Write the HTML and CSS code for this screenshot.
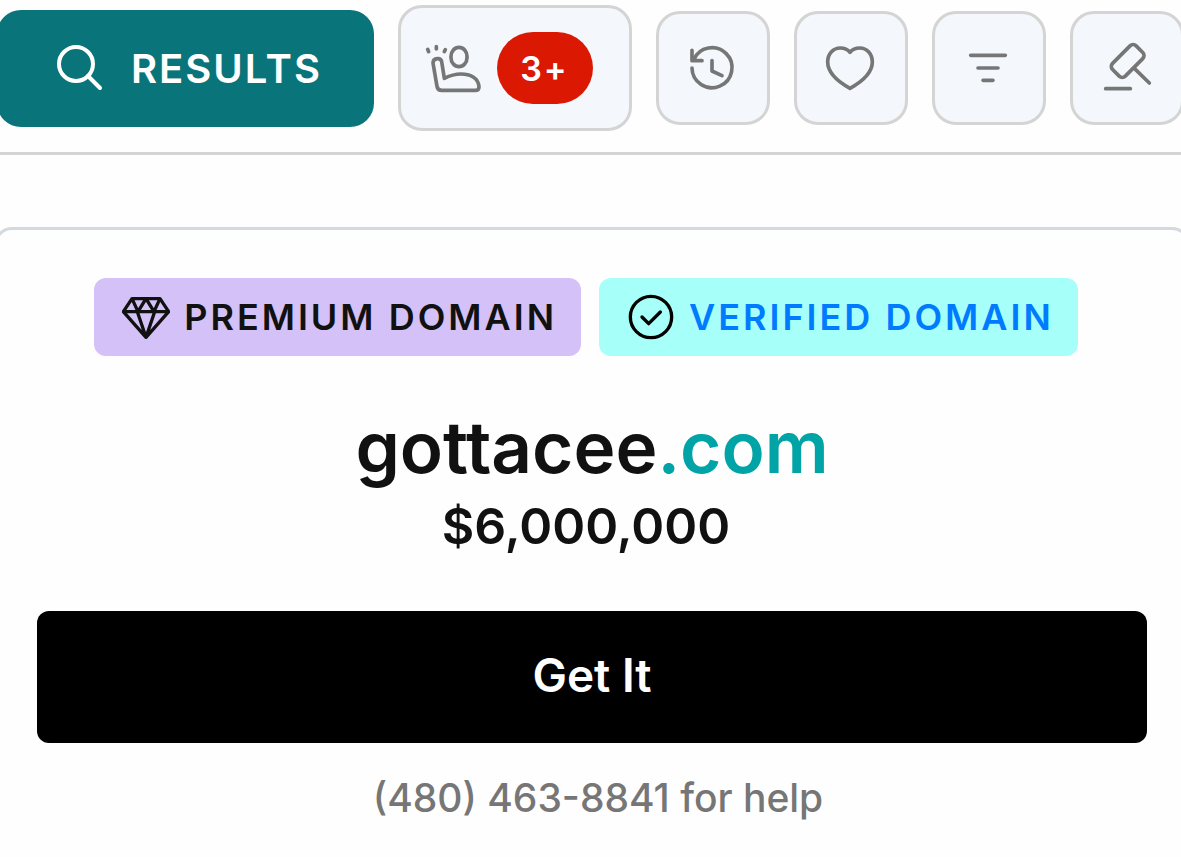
FILE: index.html
```html
<!DOCTYPE html>
<html lang="en">
<head>
    <meta charset="UTF-8">
    <meta name="viewport" content="width=device-width, initial-scale=1.0">
    <title>gottacee.com</title>
    <link rel="stylesheet" href="styles.css">
</head>
<body>
    <header class="toolbar">
        <button class="tool results" type="button">
            <svg class="icon-small" viewBox="0 0 48 48" aria-hidden="true">
                <circle cx="21" cy="20" r="17"/>
                <path d="M33 32L45 44"/>
            </svg>
            Results
        </button>
        <button class="tool agents" type="button" aria-label="Agents">
            <svg class="icon-agent" viewBox="0 0 180 162" aria-hidden="true">
                <path d="M11 25L14 32M37 17V24M64 26L61 32"/>
                <rect x="81" y="19" width="48" height="58" rx="24" ry="27"/>
                <path d="M61 112L53 62Q51 52 40 53Q27 54 27 66L39 136Q41 148 53 148H154Q165 148 165 137C163 110 138 99 111 99C90 99 75 105 61 112Z"/>
            </svg>
            <span class="count">3+</span>
        </button>
        <button class="tool" type="button" aria-label="History">
            <svg class="icon" viewBox="0 0 168 168" aria-hidden="true">
                <path d="M21 84A60 60 0 1 0 26 59M21 31V62H51M81 62V93L111 107"/>
            </svg>
        </button>
        <button class="tool" type="button" aria-label="Favorites">
            <svg class="icon" viewBox="0 0 168 168" aria-hidden="true">
                <path d="M81 37C74 28 63 24 52 24C30 24 14 42 14 66C14 97 45 125 81 145C117 125 148 97 148 66C148 42 132 24 110 24C99 24 88 28 81 37Z"/>
            </svg>
        </button>
        <button class="tool" type="button" aria-label="Filters">
            <svg class="icon" viewBox="0 0 168 168" aria-hidden="true">
                <path d="M29 46H133M51 84H111M66 121H96"/>
            </svg>
        </button>
        <button class="tool" type="button" aria-label="Auctions">
            <svg class="icon" viewBox="0 0 168 168" aria-hidden="true">
                <rect x="36" y="36" width="100" height="54" rx="13" transform="rotate(-45 86 63)"/>
                <path d="M106 85L151 129M20 146H94"/>
            </svg>
        </button>
    </header>

    <main class="card">
        <div class="badges">
            <span class="badge premium">
                <svg class="icon-small" viewBox="0 0 144 144" aria-hidden="true">
                    <path d="M30 17H114L140 56L72 133L4 56ZM4 56H140M30 17L48 56L72 17L96 56L114 17M46 56L72 133L98 56"/>
                </svg>
                Premium Domain
            </span>
            <span class="badge verified">
                <svg class="icon-small" viewBox="0 0 144 144" aria-hidden="true">
                    <circle cx="72" cy="72" r="62"/>
                    <path d="M45 72L65 92L100 57"/>
                </svg>
                Verified Domain
            </span>
        </div>
        <h1 class="domain">gottacee<span class="tld">.com</span></h1>
        <p class="price">$6,000,000</p>
        <button class="get-it" type="button">Get It</button>
        <p class="help">(480) 463-8841 for help</p>
    </main>
</body>
</html>
```

FILE: styles.css
```css
* {
    box-sizing: border-box;
}
body {
    font-family: Inter, Lato, sans-serif;
    margin: 0;
    min-height: 100vh;
    display: flex;
    flex-direction: column;
    background: #fefefe;
    color: #111;
    overflow-x: hidden;
}
button {
    font-family: inherit;
    font-weight: 600;
    cursor: pointer;
}
svg {
    flex: none;
    fill: none;
    stroke: currentColor;
    stroke-width: 11;
    stroke-linecap: round;
    stroke-linejoin: round;
}
.icon {
    width: 56px;
    height: 56px;
}
.icon-small {
    width: 48px;
    height: 48px;
}
.icon-agent {
    width: 60px;
    height: 54px;
}

.toolbar {
    display: flex;
    align-items: center;
    gap: 24px;
    margin: 0 -3px;
    padding: 5px 0 21px;
    border-bottom: 3px solid #d4d4d4;
}
.tool {
    flex: none;
    display: flex;
    align-items: center;
    justify-content: center;
    width: 114px;
    height: 114px;
    padding: 0;
    border: 3px solid #d4d4d4;
    border-radius: 24px;
    background: #f4f8fc;
    color: #767676;
}
.results {
    width: 377px;
    height: 117px;
    gap: 28px;
    padding-left: 6px;
    border: 0;
    background: #09757a;
    color: #fff;
    font-size: 40px;
    letter-spacing: 2px;
    text-transform: uppercase;
}
.results svg {
    stroke-width: 4;
}
.agents {
    width: 234px;
    height: 126px;
    gap: 13px;
    padding-right: 14px;
}
.count {
    display: flex;
    align-items: center;
    justify-content: center;
    width: 96px;
    height: 72px;
    border-radius: 36px;
    background: #db1802;
    color: #fff;
    font-size: 34px;
    letter-spacing: 2px;
}

.card {
    flex: 1;
    margin: 72px -9px 0 -6px;
    padding: 48px 40px 24px;
    border: 3px solid #d4d9df;
    border-bottom: 0;
    border-radius: 18px 18px 0 0;
    text-align: center;
}
.badges {
    display: flex;
    justify-content: center;
    gap: 18px;
    padding-right: 12px;
}
.badge {
    display: flex;
    align-items: center;
    gap: 14px;
    height: 78px;
    padding: 0 24px 0 28px;
    border-radius: 12px;
    font-size: 36px;
    font-weight: 600;
    letter-spacing: 3px;
    text-transform: uppercase;
    white-space: nowrap;
}
.badge svg {
    stroke-width: 10;
}
.premium {
    background: #d3c1f7;
}
.verified {
    background: #a6fff8;
    color: #007bff;
}
.verified svg {
    color: #000;
}
.domain {
    margin: 48px 0 0;
    font-size: 71px;
    line-height: 87px;
    font-weight: 600;
}
.tld {
    color: #00a4a6;
}
.price {
    margin: 0;
    padding-right: 12px;
    font-size: 50px;
    line-height: 70px;
    font-weight: 600;
}
.get-it {
    display: block;
    width: 100%;
    height: 132px;
    margin-top: 50px;
    padding: 0 0 4px;
    border: 0;
    border-radius: 12px;
    background: #000;
    color: #fff;
    font-size: 46px;
}
.help {
    margin: 30px 0 0;
    padding-left: 12px;
    color: #767676;
    font-size: 39px;
    line-height: 50px;
    font-weight: 500;
}
```
